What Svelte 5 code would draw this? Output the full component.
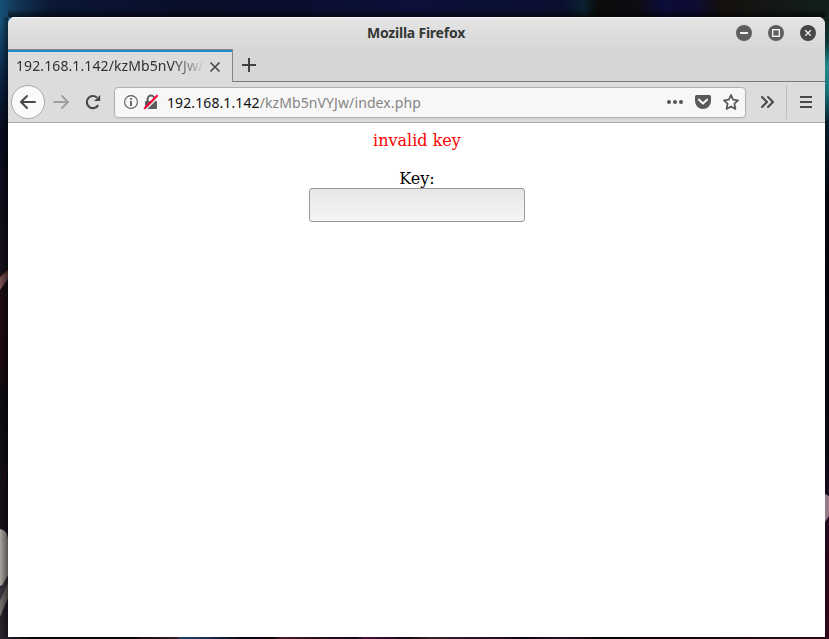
<script>
  let key = $state('');
</script>

<div class="desktop">
  <svg class="wallpaper" width="829" height="639" viewBox="0 0 829 639" aria-hidden="true">
    <defs>
      <linearGradient id="sky">
        <stop offset="0" stop-color="#164f75" /><stop offset=".018" stop-color="#123858" />
        <stop offset=".06" stop-color="#0b1735" /><stop offset=".25" stop-color="#080d29" />
        <stop offset=".5" stop-color="#0c103a" /><stop offset=".68" stop-color="#0b1032" />
        <stop offset=".705" stop-color="#09212d" /><stop offset=".72" stop-color="#0c0c0c" />
        <stop offset=".77" stop-color="#0e0c13" /><stop offset=".8" stop-color="#0c0c3a" />
        <stop offset=".84" stop-color="#0e0c32" /><stop offset=".87" stop-color="#14100e" />
        <stop offset=".95" stop-color="#141a17" /><stop offset="1" stop-color="#102018" />
      </linearGradient>
      <linearGradient id="left" x2="0" y2="1">
        <stop offset="0" stop-color="#17587f" /><stop offset=".1" stop-color="#0b2447" />
        <stop offset=".18" stop-color="#080b20" /><stop offset=".41" stop-color="#17101b" />
        <stop offset=".47" stop-color="#200b10" /><stop offset=".56" stop-color="#1b0b10" />
        <stop offset=".62" stop-color="#0c0c12" /><stop offset=".8" stop-color="#171119" />
        <stop offset="1" stop-color="#2d2530" />
      </linearGradient>
      <linearGradient id="right" x2="0" y2="1">
        <stop offset="0" stop-color="#12221d" /><stop offset=".04" stop-color="#0d3436" />
        <stop offset=".08" stop-color="#218b90" /><stop offset=".12" stop-color="#167176" />
        <stop offset=".17" stop-color="#071b29" /><stop offset=".3" stop-color="#03030c" />
        <stop offset=".7" stop-color="#090812" /><stop offset=".78" stop-color="#1b0a24" />
        <stop offset=".87" stop-color="#250619" /><stop offset="1" stop-color="#2d0718" />
      </linearGradient>
      <linearGradient id="floor">
        <stop offset="0" stop-color="#29222c" /><stop offset=".04" stop-color="#08070a" />
        <stop offset=".16" stop-color="#0a0609" /><stop offset=".2" stop-color="#2b1b20" />
        <stop offset=".213" stop-color="#30202a" /><stop offset=".218" stop-color="#1d426a" />
        <stop offset=".25" stop-color="#172f56" /><stop offset=".29" stop-color="#090713" />
        <stop offset=".33" stop-color="#10040c" /><stop offset=".34" stop-color="#4c1b2b" />
        <stop offset=".37" stop-color="#32101d" /><stop offset=".43" stop-color="#140616" />
        <stop offset=".44" stop-color="#49103b" /><stop offset=".47" stop-color="#2d0b2b" />
        <stop offset=".49" stop-color="#15060f" /><stop offset=".52" stop-color="#38202b" />
        <stop offset=".6" stop-color="#280b20" /><stop offset=".63" stop-color="#09040b" />
        <stop offset=".68" stop-color="#22121e" /><stop offset=".73" stop-color="#050307" />
        <stop offset=".88" stop-color="#170811" /><stop offset="1" stop-color="#2d0718" />
      </linearGradient>
      <linearGradient id="shade"><stop offset="0" stop-opacity="0" /><stop offset="1" stop-opacity=".5" /></linearGradient>
      <linearGradient id="top-shade" x2="0" y2="1"><stop offset=".5" stop-opacity="0" /><stop offset="1" stop-opacity=".6" /></linearGradient>
    </defs>
    <rect width="829" height="639" fill="#08070d" />
    <rect width="829" height="20" fill="url(#sky)" />
    <rect y="17" width="10" height="622" fill="url(#left)" />
    <rect x="823" y="17" width="6" height="622" fill="url(#right)" />
    <path d="M0 278L8 271V279L0 290Z" fill="#795052" /><path d="M0 277L8 270" stroke="#8b3d20" />
    <path d="M8 469Q2 475 5 486" fill="none" stroke="#3b152b" />
    <path d="M0 529Q7 530 8 538V578Q5 585 0 586Z" fill="#aaa39e" />
    <path d="M8 579L0 599V617L8 598Z" fill="#77706f" />
    <path d="M0 589L8 575V583L0 601Z" fill="#3f3642" />
    <path d="M825 494L829 496V516L825 522Z" fill="#957b87" />
    <rect y="17" width="8" height="622" fill="url(#shade)" />
    <rect x="8" width="817" height="17" fill="url(#top-shade)" />
    <rect y="637" width="829" height="2" fill="url(#floor)" />
  </svg>

  <main class="window">
    <header class="titlebar">
      <h1>Mozilla Firefox</h1>
      <svg width="82" height="18" viewBox="0 0 82 18" aria-label="Window controls">
        <circle cx="9" cy="9" r="8" fill="#5e5e5e" /><path d="M5 9H13" stroke="#eee" stroke-width="2" />
        <circle cx="41" cy="9" r="8" fill="#5e5e5e" /><rect x="37.7" y="5.7" width="6.6" height="6.6" fill="none" stroke="#eee" stroke-width="1.4" />
        <circle cx="73" cy="9" r="8" fill="#464646" /><path d="M70.2 6.2L75.8 11.8M75.8 6.2L70.2 11.8" stroke="#eee" stroke-width="1.3" />
      </svg>
    </header>

    <div class="tabs">
      <div class="tab">
        <span class="tab-title">192.168.1.142/kzMb5nVYJw/</span>
        <svg width="12" height="12" viewBox="0 0 12 12" aria-label="Close tab"><path d="M1.5 1.5L10.5 10.5M10.5 1.5L1.5 10.5" stroke="#484848" stroke-width="1.6" /></svg>
      </div>
      <div class="tab-rest">
        <svg width="16" height="16" viewBox="0 0 16 16" aria-label="New tab"><path d="M8 1V15M1 8H15" stroke="#424242" stroke-width="2" /></svg>
      </div>
    </div>

    <nav>
      <button class="back" aria-label="Back"><svg width="18" height="16" viewBox="0 0 18 16"><path d="M16 8H2M8 2L2 8L8 14" /></svg></button>
      <svg class="forward" width="18" height="16" viewBox="0 0 18 16"><path d="M1 8H15M9 2L15 8L9 14" /></svg>
      <svg class="reload" width="18" height="18" viewBox="0 0 18 18"><path d="M14.2 12.1A6.1 6.1 0 1 1 13 4.5" fill="none" stroke="#484848" stroke-width="2.1" /><path d="M16.2 2V8.1H10.1Z" fill="#484848" /></svg>
      <div class="address">
        <svg class="info" width="16" height="16" viewBox="0 0 16 16"><circle cx="8" cy="8" r="6.4" fill="none" stroke="#5c5c5c" stroke-width="1.1" /><path d="M8 4V5.8M8 7V12" stroke="#5c5c5c" stroke-width="1.8" /></svg>
        <svg class="lock" width="16" height="16" viewBox="0 0 16 16"><path d="M4.6 7.5V5A3.4 3.4 0 0 1 11.4 5V7.5" fill="none" stroke="#5c5c5c" stroke-width="2" /><rect x="2" y="7" width="12" height="8" rx="1" fill="#5c5c5c" /><path d="M2.2 16.2L15.2 3.2" stroke="#f7f7f7" stroke-width="1.3" /><path d="M1.2 14.8L14.6 1.2" stroke="#ff0039" stroke-width="2" /></svg>
        <span class="url"><b>192.168.1.142</b>/kzMb5nVYJw/index.php</span>
        <svg class="actions" width="74" height="18" viewBox="0 0 74 18">
          <circle cx="3" cy="9" r="2" fill="#555" /><circle cx="9" cy="9" r="2" fill="#555" /><circle cx="15" cy="9" r="2" fill="#555" />
          <path d="M30.5 2H43.5Q45 2 45 3.5V8A8 8 0 0 1 29 8V3.5Q29 2 30.5 2Z" fill="#5a5a5a" /><path d="M33 6.7L37 10.4L41 6.7" fill="none" stroke="#f8f8f8" stroke-width="2.1" stroke-linecap="round" stroke-linejoin="round" />
          <path d="M65 2L67.1 6.7L72 7.3L68.4 10.7L69.4 16L65 13.4L60.6 16L61.6 10.7L58 7.3L62.9 6.7Z" fill="none" stroke="#5a5a5a" stroke-width="1.8" stroke-linejoin="round" />
        </svg>
      </div>
      <svg class="more" width="16" height="14" viewBox="0 0 16 14"><path d="M2 2L7 7L2 12M8 2L13 7L8 12" fill="none" stroke="#484848" stroke-width="2" stroke-linecap="round" stroke-linejoin="round" /></svg>
      <div class="menu"><svg width="12" height="12" viewBox="0 0 12 12"><path d="M0 1H12M0 6H12M0 11H12" stroke="#484848" stroke-width="2" /></svg></div>
    </nav>

    <section>
      <p class="error">invalid key</p>
      <label for="key">Key:</label>
      <input id="key" type="password" bind:value={key} />
    </section>
  </main>
</div>

<style>
  :global(body) { margin: 0; overflow: hidden; }
  * { box-sizing: border-box; }
  svg { display: block; flex: none; }
  .desktop { position: relative; width: 829px; height: 639px; padding: 17px 4px 2px 8px; background: #070710; }
  .wallpaper { position: absolute; inset: 0; }
  .window { position: relative; height: 620px; display: flex; flex-direction: column; overflow: hidden; border-radius: 7px 7px 0 0; background: #fff; color: #303030; font: 14px "Noto Sans", sans-serif; }
  .titlebar { height: 32px; display: flex; justify-content: flex-end; padding: 7px 8px 0 0; background: linear-gradient(#e5e5e5, #d7d7d7); box-shadow: inset 0 1px #f7f7f7; }
  h1 { flex: 1; margin: 0 -90px 0 0; padding-right: 1px; text-align: center; font: bold 14px/18px "Noto Sans", sans-serif; letter-spacing: -.22px; color: #333936; }
  .tabs { display: flex; height: 33px; background: #d6d6d6; }
  .tab { width: 225px; display: flex; align-items: center; padding: 2px 11px 0 8px; border-top: 1px solid #8a8580; border-right: 1px solid #858585; background: #dcdcdc; box-shadow: inset 0 2px #218bcc; }
  .tab-title { width: 188px; margin-right: 5px; padding-bottom: 3px; overflow: hidden; white-space: nowrap; letter-spacing: .1px; mask-image: linear-gradient(90deg, #000 156px, transparent 190px); }
  .tab-rest { flex: 1; padding: 8px 0 0 8px; border-bottom: 1px solid #777a78; }
  nav { height: 41px; display: flex; align-items: center; padding-left: 3px; background: #dcdcdc; border-bottom: 1px solid #adadad; }
  .back { width: 34px; height: 34px; padding: 0; display: grid; place-items: center; border: 1px solid #aaa; border-radius: 50%; background: #fafafa; }
  .back path, .forward path { fill: none; stroke: #484848; stroke-width: 2; stroke-linecap: round; stroke-linejoin: round; }
  .forward { margin-left: 8px; }
  .forward path { stroke: #a0a0a0; }
  .reload { margin-left: 13px; }
  .address { width: 632px; height: 31px; margin-left: 12px; display: flex; align-items: center; padding: 0 5px 0 8px; border: 1px solid #b0b0b0; border-radius: 4px; background: #f7f7f7; box-shadow: 0 1px 2px #0001; }
  .lock { margin-left: 4px; }
  .url { flex: 1; margin-left: 8px; color: #858585; white-space: nowrap; letter-spacing: .1px; }
  .url b { font-weight: normal; color: #111; }
  .more { margin-left: 14px; }
  .menu { width: 39px; height: 34px; margin-left: 10px; padding-left: 13px; display: flex; align-items: center; border-left: 1px solid #bfbfbf; }
  section { flex: 1; display: flex; flex-direction: column; align-items: center; padding-top: 8px; color: #000; font: 16px/19px "DejaVu Serif", serif; }
  .error { margin: 0 0 19px; padding-left: 1px; color: red; }
  label { padding-left: 1px; }
  input { width: 216px; height: 34px; padding: 4px 8px; border: 1px solid #999; border-radius: 3px; outline: 0; background: linear-gradient(#e6e6e6, #f5f5f5); font: inherit; }
</style>
